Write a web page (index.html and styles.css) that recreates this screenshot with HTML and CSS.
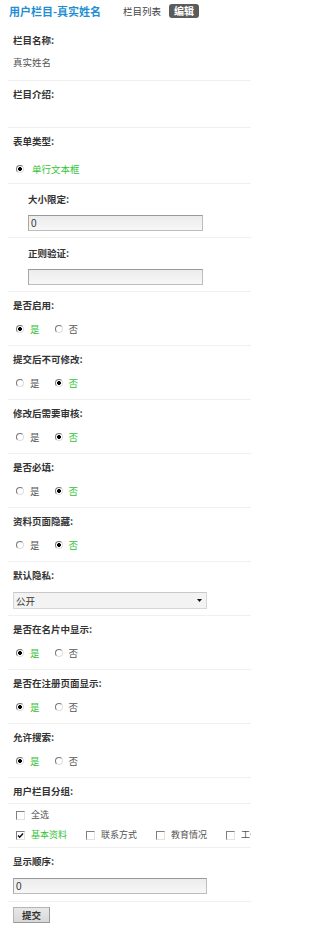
FILE: index.html
```html
<!DOCTYPE html>
<html lang="zh-CN">
<head>
<meta charset="utf-8">
<title>用户栏目-真实姓名</title>
<link rel="stylesheet" href="styles.css">
</head>
<body>
<div class="page">
  <div class="head">
    <span class="title">用户栏目-真实姓名</span>
    <span class="tab">栏目列表</span>
    <span class="badge">编辑</span>
  </div>

  <div class="field">
    <div class="label">栏目名称:</div>
    <div class="value">真实姓名</div>
  </div>

  <div class="field">
    <div class="label">栏目介绍:</div>
    <div class="value empty"></div>
  </div>

  <div class="field field-type">
    <div class="label">表单类型:</div>
    <div class="opts"><label class="opt on"><input type="radio" name="t" checked>单行文本框</label></div>
  </div>

  <div class="field sub">
    <div class="label">大小限定:</div>
    <input class="text short" type="text" value="0">
  </div>

  <div class="field sub">
    <div class="label">正则验证:</div>
    <input class="text short" type="text" value="">
  </div>

  <div class="field">
    <div class="label">是否启用:</div>
    <div class="opts">
      <label class="opt on"><input type="radio" name="a" checked>是</label>
      <label class="opt"><input type="radio" name="a">否</label>
    </div>
  </div>

  <div class="field">
    <div class="label">提交后不可修改:</div>
    <div class="opts">
      <label class="opt"><input type="radio" name="b">是</label>
      <label class="opt on"><input type="radio" name="b" checked>否</label>
    </div>
  </div>

  <div class="field">
    <div class="label">修改后需要审核:</div>
    <div class="opts">
      <label class="opt"><input type="radio" name="c">是</label>
      <label class="opt on"><input type="radio" name="c" checked>否</label>
    </div>
  </div>

  <div class="field">
    <div class="label">是否必填:</div>
    <div class="opts">
      <label class="opt"><input type="radio" name="d">是</label>
      <label class="opt on"><input type="radio" name="d" checked>否</label>
    </div>
  </div>

  <div class="field">
    <div class="label">资料页面隐藏:</div>
    <div class="opts">
      <label class="opt"><input type="radio" name="e">是</label>
      <label class="opt on"><input type="radio" name="e" checked>否</label>
    </div>
  </div>

  <div class="field">
    <div class="label">默认隐私:</div>
    <div class="selwrap">
      <select class="sel"><option>公开</option></select>
      <svg class="arrow" width="5" height="3" viewBox="0 0 5 3"><path d="M0 0H5L2.5 3Z" fill="#111"/></svg>
    </div>
  </div>

  <div class="field">
    <div class="label">是否在名片中显示:</div>
    <div class="opts">
      <label class="opt on"><input type="radio" name="f" checked>是</label>
      <label class="opt"><input type="radio" name="f">否</label>
    </div>
  </div>

  <div class="field">
    <div class="label">是否在注册页面显示:</div>
    <div class="opts">
      <label class="opt on"><input type="radio" name="g" checked>是</label>
      <label class="opt"><input type="radio" name="g">否</label>
    </div>
  </div>

  <div class="field">
    <div class="label">允许搜索:</div>
    <div class="opts">
      <label class="opt on"><input type="radio" name="h" checked>是</label>
      <label class="opt"><input type="radio" name="h">否</label>
    </div>
  </div>

  <div class="field group-head">
    <div class="label">用户栏目分组:</div>
  </div>

  <div class="field group">
    <div class="checks">
      <span class="chk"><span class="box"></span>全选</span>
    </div>
    <div class="checks second">
      <span class="chk on"><span class="box"><svg width="7" height="7" viewBox="0 0 7 7"><path d="M1 3.5L2.7 5.3L6 1.5" fill="none" stroke="#111" stroke-width="1.4"/></svg></span>基本资料</span>
      <span class="chk"><span class="box"></span>联系方式</span>
      <span class="chk"><span class="box"></span>教育情况</span>
      <span class="chk"><span class="box"></span>工作情况</span>
    </div>
  </div>

  <div class="field order">
    <div class="label">显示顺序:</div>
    <input class="text long" type="text" value="0">
  </div>

  <button class="submit" type="button">提交</button>
</div>
</body>
</html>
```

FILE: styles.css
```css
html, body {
  margin: 0;
  padding: 0;
  background: #fff;
}
body {
  font-family: "Noto Sans CJK SC", "Liberation Sans", sans-serif;
  font-size: 10px;
  color: #333;
  overflow-x: hidden;
}
.page {
  padding-left: 8px;
  overflow: hidden;
  width: 243px;
}
.head {
  display: flex;
  align-items: center;
  height: 14px;
  padding: 4px 0 9px 1px;
}
.title {
  font-size: 11px;
  font-weight: bold;
  color: #1f8fd1;
  line-height: 14px;
  white-space: nowrap;
}
.tab {
  margin-left: 22px;
  font-size: 9.5px;
  color: #444;
  line-height: 14px;
}
.badge {
  margin-left: 8px;
  background: #5b5b5b;
  color: #fff;
  font-weight: bold;
  font-size: 10px;
  line-height: 14px;
  height: 14px;
  padding: 0 5px;
  border-radius: 3px;
}
.field {
  border-bottom: 1px solid #f0f0f0;
  padding: 7px 0 12px 5px;
}
.label {
  font-size: 9.5px;
  font-weight: bold;
  line-height: 12px;
  color: #333;
  white-space: nowrap;
}
.value {
  margin-top: 10px;
  line-height: 12px;
  font-size: 9.5px;
  color: #555;
}
.value.empty {
  height: 5px;
}
.opts {
  display: flex;
  align-items: center;
  height: 12px;
  margin-top: 12px;
}
.field:has(.opts) {
  padding-bottom: 10px;
}
.field-type .opts {
  margin-top: 16px;
}
.field.field-type {
  padding-bottom: 8px;
}
.opt {
  display: inline-flex;
  align-items: center;
  font-size: 9.5px;
  line-height: 12px;
  color: #555;
  margin-right: 12px;
}
.opt.on {
  color: #33c433;
}
.opt input[type=radio] {
  -webkit-appearance: none;
  appearance: none;
  box-sizing: border-box;
  width: 8px;
  height: 8px;
  margin: 0 6px 0 3px;
  border-radius: 50%;
  border: 1px solid;
  border-color: #777 #dedede #dedede #777;
  background: #fff;
}
.opt input[type=radio]:checked {
  background: radial-gradient(circle, #000 0 1.6px, #fff 2.2px);
}
.field-type .opt input[type=radio] {
  margin-right: 8px;
}
.sub {
  padding: 9px 0 6px 20px;
}
.text {
  display: block;
  box-sizing: border-box;
  height: 16px;
  margin: 10px 0 0;
  padding: 0 2px;
  border: 1px solid #bdbdbd;
  border-top-color: #999;
  border-left-color: #a8a8a8;
  background: linear-gradient(#ececec, #f7f7f7);
  font-family: "Liberation Sans", sans-serif;
  font-size: 10px;
  color: #333;
  outline: none;
}
.short {
  width: 175px;
}
.long {
  width: 194px;
}
.selwrap {
  position: relative;
  width: 194px;
  margin-top: 11px;
}
.sel {
  display: block;
  -webkit-appearance: none;
  appearance: none;
  box-sizing: border-box;
  width: 194px;
  height: 17px;
  margin: 0;
  padding: 0 0 0 2px;
  border: 1px solid #d6d6d6;
  border-top-color: #c8c8c8;
  background: #f3f3f3;
  font-family: "Noto Sans CJK SC", sans-serif;
  font-size: 9.5px;
  color: #333;
  border-radius: 0;
}
.arrow {
  position: absolute;
  right: 5px;
  top: 7px;
}
.field:has(.selwrap) {
  padding-bottom: 6px;
}
.group-head {
  padding-bottom: 6px;
}
.field.group {
  padding: 0 0 6px 5px;
}
.checks {
  display: flex;
  align-items: center;
  height: 12px;
  margin-top: 5px;
  white-space: nowrap;
}
.checks.second {
  margin-top: 8px;
}
.chk {
  display: inline-flex;
  align-items: center;
  flex: none;
  font-size: 9px;
  line-height: 12px;
  color: #555;
  margin-right: 16px;
}
.chk.on {
  color: #33c433;
}
.box {
  box-sizing: border-box;
  display: inline-flex;
  align-items: center;
  justify-content: center;
  width: 9px;
  height: 9px;
  margin: 0 6px 0 3px;
  border: 1px solid;
  border-color: #808080 #e2e2e2 #e2e2e2 #808080;
  background: #fff;
}
.field.order {
  padding-bottom: 7px;
}
.order .text {
  margin-top: 11px;
}
.submit {
  display: block;
  margin: 5px 0 0 5px;
  width: 37px;
  height: 16px;
  padding: 0;
  border: 1px solid #b5b5b5;
  border-right-color: #999;
  border-bottom-color: #999;
  background: linear-gradient(#e8e8e8, #d8d8d8);
  font-family: "Noto Sans CJK SC", sans-serif;
  font-size: 9.5px;
  font-weight: bold;
  color: #333;
  line-height: 14px;
}
```
